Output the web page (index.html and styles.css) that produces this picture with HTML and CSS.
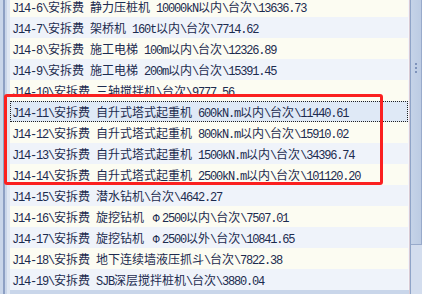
FILE: index.html
```html
<!DOCTYPE html>
<html lang="zh-CN">
<head>
    <meta charset="UTF-8">
    <title>安拆费</title>
    <link rel="stylesheet" href="styles.css">
</head>
<body>
    <div class="window">
        <div class="frame-left"></div>

        <!-- List -->
        <div class="list-col">
            <div class="list">
                <div class="row"><span class="en">J14-6\</span>安拆费<span class="en"> </span>静力压桩机<span class="en"> 10000kN</span>以内<span class="en">\</span>台次<span class="en">\13636.73</span></div>
                <div class="row"><span class="en">J14-7\</span>安拆费<span class="en"> </span>架桥机<span class="en"> 160t</span>以内<span class="en">\</span>台次<span class="en">\7714.62</span></div>
                <div class="row"><span class="en">J14-8\</span>安拆费<span class="en"> </span>施工电梯<span class="en"> 100m</span>以内<span class="en">\</span>台次<span class="en">\12326.89</span></div>
                <div class="row"><span class="en">J14-9\</span>安拆费<span class="en"> </span>施工电梯<span class="en"> 200m</span>以内<span class="en">\</span>台次<span class="en">\15391.45</span></div>
                <div class="row"><span class="en">J14-10\</span>安拆费<span class="en"> </span>三轴搅拌机<span class="en">\</span>台次<span class="en">\9777.56</span></div>
                <div class="row selected"><span class="en">J14-11\</span>安拆费<span class="en"> </span>自升式塔式起重机<span class="en"> 600kN.m</span>以内<span class="en">\</span>台次<span class="en">\11440.61</span></div>
                <div class="row"><span class="en">J14-12\</span>安拆费<span class="en"> </span>自升式塔式起重机<span class="en"> 800kN.m</span>以内<span class="en">\</span>台次<span class="en">\15910.02</span></div>
                <div class="row"><span class="en">J14-13\</span>安拆费<span class="en"> </span>自升式塔式起重机<span class="en"> 1500kN.m</span>以内<span class="en">\</span>台次<span class="en">\34396.74</span></div>
                <div class="row"><span class="en">J14-14\</span>安拆费<span class="en"> </span>自升式塔式起重机<span class="en"> 2500kN.m</span>以内<span class="en">\</span>台次<span class="en">\101120.20</span></div>
                <div class="row"><span class="en">J14-15\</span>安拆费<span class="en"> </span>潜水钻机<span class="en">\</span>台次<span class="en">\4642.27</span></div>
                <div class="row"><span class="en">J14-16\</span>安拆费<span class="en"> </span>旋挖钻机<span class="en"> </span><span class="phi">Φ</span><span class="en">2500</span>以内<span class="en">\</span>台次<span class="en">\7507.01</span></div>
                <div class="row"><span class="en">J14-17\</span>安拆费<span class="en"> </span>旋挖钻机<span class="en"> </span><span class="phi">Φ</span><span class="en">2500</span>以外<span class="en">\</span>台次<span class="en">\10841.65</span></div>
                <div class="row"><span class="en">J14-18\</span>安拆费<span class="en"> </span>地下连续墙液压抓斗<span class="en">\</span>台次<span class="en">\7822.38</span></div>
                <div class="row"><span class="en">J14-19\</span>安拆费<span class="en"> SJB</span>深层搅拌桩机<span class="en">\</span>台次<span class="en">\3880.04</span></div>
            </div>
            <div class="list-bottom"></div>
        </div>

        <!-- Scrollbar -->
        <div class="scrollbar">
            <div class="thumb"><span class="grip"></span></div>
        </div>
    </div>

    <!-- Red annotation box -->
    <div class="mark"></div>
</body>
</html>
```

FILE: styles.css
```css
* {
    margin: 0;
    padding: 0;
    box-sizing: border-box;
}
body {
    width: 422px;
    height: 294px;
    overflow: hidden;
    position: relative;
    background: #c9d6ea;
    font-family: "Noto Sans CJK SC", sans-serif;
    font-size: 12px;
    color: #1c2b4f;
}
.window {
    display: flex;
    height: 294px;
}
.frame-left {
    width: 10px;
    flex: none;
    background: linear-gradient(to right, #c9d6ea 0 3px, #8da0c4 3px 5px, #c9d6ea 5px 7px, #dfe7f3 7px 10px);
}
/* List */
.list-col {
    width: 400px;
    flex: none;
    display: flex;
    flex-direction: column;
    border-right: 1px solid #d9c9d3;
}
.list {
    height: 290px;
    overflow: hidden;
    border-right: 1px solid #f4f6fb;
}
.row {
    height: 21px;
    line-height: 21px;
    padding-left: 2px;
    white-space: nowrap;
    background: #fcfcf2;
}
.row:first-child {
    margin-top: -4px;
}
.row:nth-child(even) {
    background: #eff3fa;
}
.row.selected {
    background: #dfe9f6;
    outline: 1px dotted #222;
    outline-offset: -1px;
}
.en {
    font-family: "Liberation Mono", monospace;
    font-size: 12px;
    letter-spacing: -1.2px;
    white-space: pre;
}
.phi {
    display: inline-block;
    width: 12px;
    text-align: center;
    font-family: "DejaVu Sans", sans-serif;
    font-size: 10px;
}
.list-bottom {
    height: 4px;
    background: #c9d6ea;
}
/* Scrollbar */
.scrollbar {
    flex: 1;
    background: #d3ddee;
    border-left: 1px solid #8fa4c8;
}
.thumb {
    height: 255px;
    margin-top: -10px;
    background: linear-gradient(to right, #c5d3e8, #bccbe3);
    border-right: 1px solid #98aacb;
    border-bottom: 1px solid #98aacb;
    display: flex;
    justify-content: center;
    padding-top: 73px;
}
.grip {
    width: 2px;
    height: 12px;
    background: repeating-linear-gradient(to bottom, #7e93bb 0 2px, transparent 2px 4px);
}
/* Annotation */
.mark {
    position: absolute;
    left: 4px;
    top: 94px;
    width: 379px;
    height: 91px;
    border: 3px solid #fb2020;
    border-radius: 3px;
}
```
